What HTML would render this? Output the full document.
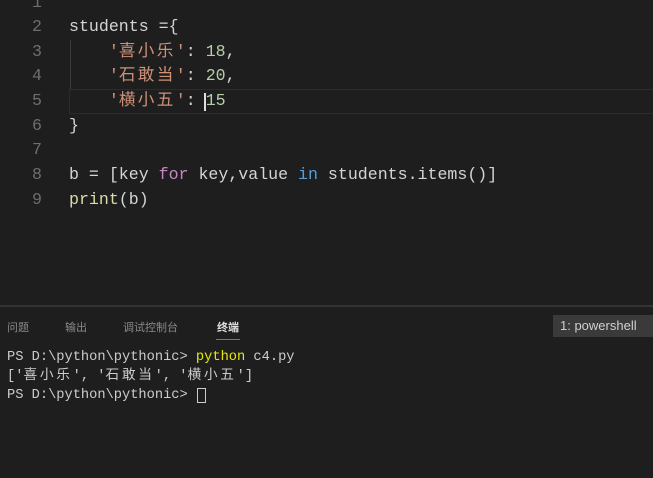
<!DOCTYPE html>
<html><head><meta charset="utf-8"><style>
body{margin:0;width:653px;height:478px;background:#1e1e1e;overflow:hidden;position:relative;font-family:"Liberation Mono","Noto Sans CJK SC",monospace}
.ln{position:absolute;left:0;width:42px;text-align:right;color:#6e6e6e;font-size:16.6px;line-height:24.7px}
.c{position:absolute;left:69px;color:#d4d4d4;font-size:16.6px;line-height:24.7px;white-space:pre}
.s{color:#ce9178}.n{color:#b5cea8}.k{color:#c586c0}.b{color:#569cd6}.f{color:#dcdcaa}
.cj{letter-spacing:2.4px}
.tj{letter-spacing:2.7px}
.t{position:absolute;left:7px;color:#cccccc;font-size:13.7px;line-height:19px;white-space:pre}
.tab{position:absolute;top:319px;font-family:"Liberation Sans","Noto Sans CJK SC",sans-serif;font-size:11px;color:#8a8a8a}
</style></head><body>
<div class="ln" style="top:-9px">1</div>
<div class="ln" style="top:15px">2</div>
<div class="ln" style="top:40px">3</div>
<div class="ln" style="top:64px">4</div>
<div class="ln" style="top:89px">5</div>
<div class="ln" style="top:114px">6</div>
<div class="ln" style="top:138px">7</div>
<div class="ln" style="top:163px">8</div>
<div class="ln" style="top:188px">9</div>
<div style="position:absolute;left:69px;top:89px;width:584px;height:23px;border-top:1px solid #2c2c2c;border-bottom:1px solid #2c2c2c;border-left:1px solid #2c2c2c"></div>
<div style="position:absolute;left:70px;top:40px;width:1px;height:49px;background:#3a3a3a"></div>
<div class="c" style="top:15px">students ={</div>
<div class="c" style="top:40px">    <span class="s">'<span class="cj">喜小乐</span>'</span>: <span class="n">18</span>,</div>
<div class="c" style="top:64px">    <span class="s">'<span class="cj">石敢当</span>'</span>: <span class="n">20</span>,</div>
<div class="c" style="top:89px">    <span class="s">'<span class="cj">横小五</span>'</span>: <span class="n">15</span></div>
<div style="position:absolute;left:204px;top:93px;width:2px;height:18px;background:#ddd"></div>
<div class="c" style="top:114px">}</div>
<div class="c" style="top:163px">b = [key <span class="k">for</span> key,value <span class="b">in</span> students.items()]</div>
<div class="c" style="top:188px"><span class="f">print</span>(b)</div>
<div style="position:absolute;left:0;top:305px;width:653px;height:2px;background:#333"></div>
<div class="tab" style="left:7px">问题</div>
<div class="tab" style="left:65px">输出</div>
<div class="tab" style="left:123px">调试控制台</div>
<div class="tab" style="left:217px;color:#e0e0e0;font-weight:bold">终端</div>
<div style="position:absolute;left:216px;top:339px;width:24px;height:1px;background:#777"></div>
<div style="position:absolute;left:553px;top:315px;width:100px;height:22px;background:#3a3a3a;color:#d0d0d0;font-family:'Liberation Sans',sans-serif;font-size:13px;line-height:22px;padding-left:7px;box-sizing:border-box">1: powershell</div>
<div class="t" style="top:348px">PS D:\python\pythonic&gt; <span style="color:#e5e510">python</span> c4.py</div>
<div class="t" style="top:367px">['<span class="tj">喜小乐</span>', '<span class="tj">石敢当</span>', '<span class="tj">横小五</span>']</div>
<div class="t" style="top:386px">PS D:\python\pythonic&gt; </div>
<div style="position:absolute;left:197px;top:388px;width:9px;height:15px;border:1px solid #ccc;box-sizing:border-box"></div>
</body></html>
